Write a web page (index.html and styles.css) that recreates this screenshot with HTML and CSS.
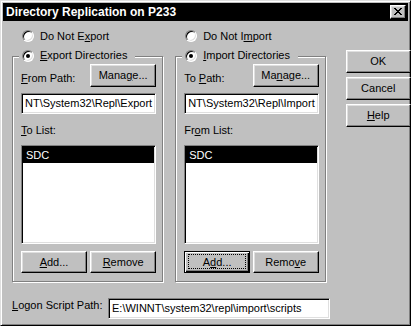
FILE: index.html
```html
<!DOCTYPE html>
<html lang="en">
<head>
  <meta charset="UTF-8">
  <title>Directory Replication on P233</title>
  <link rel="stylesheet" href="styles.css">
</head>
<body>
  <div class="window">
    <div class="titlebar">
      <span class="title">Directory Replication on P233</span>
      <span class="close">
        <svg width="8" height="7" viewBox="0 0 8 7" shape-rendering="crispEdges">
          <rect x="0" y="0" width="2" height="1"/><rect x="6" y="0" width="2" height="1"/>
          <rect x="1" y="1" width="2" height="1"/><rect x="5" y="1" width="2" height="1"/>
          <rect x="2" y="2" width="4" height="1"/>
          <rect x="3" y="3" width="2" height="1"/>
          <rect x="2" y="4" width="4" height="1"/>
          <rect x="1" y="5" width="2" height="1"/><rect x="5" y="5" width="2" height="1"/>
          <rect x="0" y="6" width="2" height="1"/><rect x="6" y="6" width="2" height="1"/>
        </svg>
      </span>
    </div>

    <div class="content">
      <div class="main">

        <div class="col">
          <div class="radio-row"><span class="radio"></span><span>Do Not E<u>x</u>port</span></div>
          <div class="group">
            <div class="legend"><span class="radio checked"></span><span><u>E</u>xport Directories</span></div>
            <div class="path-row">
              <span class="label"><u>F</u>rom Path:</span>
              <span class="btn manage"><span>Mana<u>g</u>e...</span></span>
            </div>
            <div class="field">NT\System32\Repl\Export</div>
            <div class="label list-label"><u>T</u>o List:</div>
            <div class="listbox"><div class="item selected">SDC</div></div>
            <div class="btn-row">
              <span class="btn"><span><u>A</u>dd...</span></span>
              <span class="btn"><span><u>R</u>emove</span></span>
            </div>
          </div>
        </div>

        <div class="col">
          <div class="radio-row"><span class="radio"></span><span>Do Not I<u>m</u>port</span></div>
          <div class="group">
            <div class="legend"><span class="radio checked"></span><span><u>I</u>mport Directories</span></div>
            <div class="path-row">
              <span class="label">To <u>P</u>ath:</span>
              <span class="btn manage"><span>Ma<u>n</u>age...</span></span>
            </div>
            <div class="field">NT\System32\Repl\Import</div>
            <div class="label list-label">Fr<u>o</u>m List:</div>
            <div class="listbox"><div class="item selected">SDC</div></div>
            <div class="btn-row">
              <span class="btn default"><span>A<u>d</u>d...</span></span>
              <span class="btn"><span>Remo<u>v</u>e</span></span>
            </div>
          </div>
        </div>

        <div class="buttons">
          <span class="btn">OK</span>
          <span class="btn">Cancel</span>
          <span class="btn"><span><u>H</u>elp</span></span>
        </div>
      </div>

      <div class="logon">
        <span class="label"><u>L</u>ogon Script Path:</span>
        <div class="field logon-field">E:\WINNT\system32\repl\import\scripts</div>
      </div>
    </div>
  </div>
</body>
</html>
```

FILE: styles.css
```css
body {
  margin:0;
  background:#c0c0c0;
  font-family:"Liberation Sans", Arial, sans-serif;
  font-size:11px;
  line-height:13px;
  color:#000;
}

u {
  text-decoration:underline;
  text-underline-offset:1px;
}

.window {
  width:411px;
  height:326px;
  box-sizing:border-box;
  border:1px solid;
  border-color:#dfdfdf #000 #000 #dfdfdf;
  box-shadow:inset 1px 1px #fff, inset -1px -1px #808080;
  padding:2px;
}

/* title bar */
.titlebar {
  height:18px;
  background:#000;
  display:flex;
  align-items:center;
  justify-content:space-between;
  padding:0 2px 0 3px;
}
.title {
  color:#fff;
  font-weight:bold;
  font-size:12px;
}
.close {
  width:16px;
  height:14px;
  box-sizing:border-box;
  background:#c0c0c0;
  border:1px solid;
  border-color:#fff #000 #000 #fff;
  box-shadow:inset -1px -1px #808080, inset 1px 1px #dfdfdf;
  display:flex;
  align-items:center;
  justify-content:center;
  padding-bottom:1px;
}

.content {
  padding-left:9px;
}
.main {
  display:flex;
  gap:12px;
}

.col {
  width:153px;
}

/* radios */
.radio-row {
  display:flex;
  align-items:center;
  gap:6px;
  margin-top:9px;
  padding-left:10px;
  height:12px;
}
.radio {
  position:relative;
  width:12px;
  height:12px;
  box-sizing:border-box;
  border-radius:50%;
  background:#fff;
  border:1px solid;
  border-color:#808080 #fff #fff #808080;
  box-shadow:inset 1px 1px #000, inset -1px -1px #dfdfdf;
  flex:none;
}
.radio.checked::after {
  content:"";
  position:absolute;
  left:3px;
  top:3px;
  width:4px;
  height:4px;
  border-radius:50%;
  background:#000;
}

/* group box */
.group {
  position:relative;
  margin-top:14px;
  height:226px;
  box-sizing:border-box;
  border:1px solid #808080;
  box-shadow:inset 1px 1px #fff, 1px 1px #fff;
  padding:7px 6px 0 8px;
}
.legend {
  position:absolute;
  left:6px;
  top:-8px;
  display:flex;
  align-items:center;
  gap:6px;
  background:#c0c0c0;
  padding:0 8px 0 3px;
  height:13px;
}

.path-row {
  display:flex;
  justify-content:space-between;
  align-items:flex-end;
  height:23px;
}
.path-row .label {
  padding-bottom:2px;
}

.field {
  margin-top:6px;
  height:21px;
  box-sizing:border-box;
  background:#fff;
  border:1px solid;
  border-color:#808080 #fff #fff #808080;
  box-shadow:inset 1px 1px #000, inset -1px -1px #dfdfdf;
  padding:0 3px;
  line-height:19px;
  white-space:nowrap;
  overflow:hidden;
}

.list-label {
  margin-top:10px;
}

.listbox {
  margin-top:8px;
  height:99px;
  box-sizing:border-box;
  background:#fff;
  border:1px solid;
  border-color:#808080 #fff #fff #808080;
  box-shadow:inset 1px 1px #000, inset -1px -1px #dfdfdf;
  padding:1px;
}
.item {
  height:16px;
  line-height:16px;
  padding-left:3px;
}
.item.selected {
  background:#000;
  color:#fff;
}

.btn-row {
  display:flex;
  justify-content:space-between;
  margin-top:7px;
}

/* buttons */
.btn {
  position:relative;
  display:flex;
  align-items:center;
  justify-content:center;
  width:66px;
  height:22px;
  box-sizing:border-box;
  background:#c0c0c0;
  border:1px solid;
  border-color:#fff #000 #000 #fff;
  box-shadow:inset -1px -1px #808080, inset 1px 1px #dfdfdf;
}
.btn.manage {
  height:23px;
}
.btn.default {
  border-color:#000;
  box-shadow:inset 1px 1px #fff, inset -1px -1px #000, inset -2px -2px #808080;
}
.btn.default::after {
  content:"";
  position:absolute;
  left:3px;
  top:2px;
  right:3px;
  bottom:3px;
  border:1px dotted #000;
}

.buttons {
  margin-left:8px;
  margin-top:29px;
  display:flex;
  flex-direction:column;
  gap:4px;
}
.buttons .btn {
  width:65px;
  height:23px;
}

/* logon script path */
.logon {
  display:flex;
  align-items:center;
  margin-top:10px;
}
.logon .label {
  width:96px;
}
.logon-field {
  width:222px;
}
```
